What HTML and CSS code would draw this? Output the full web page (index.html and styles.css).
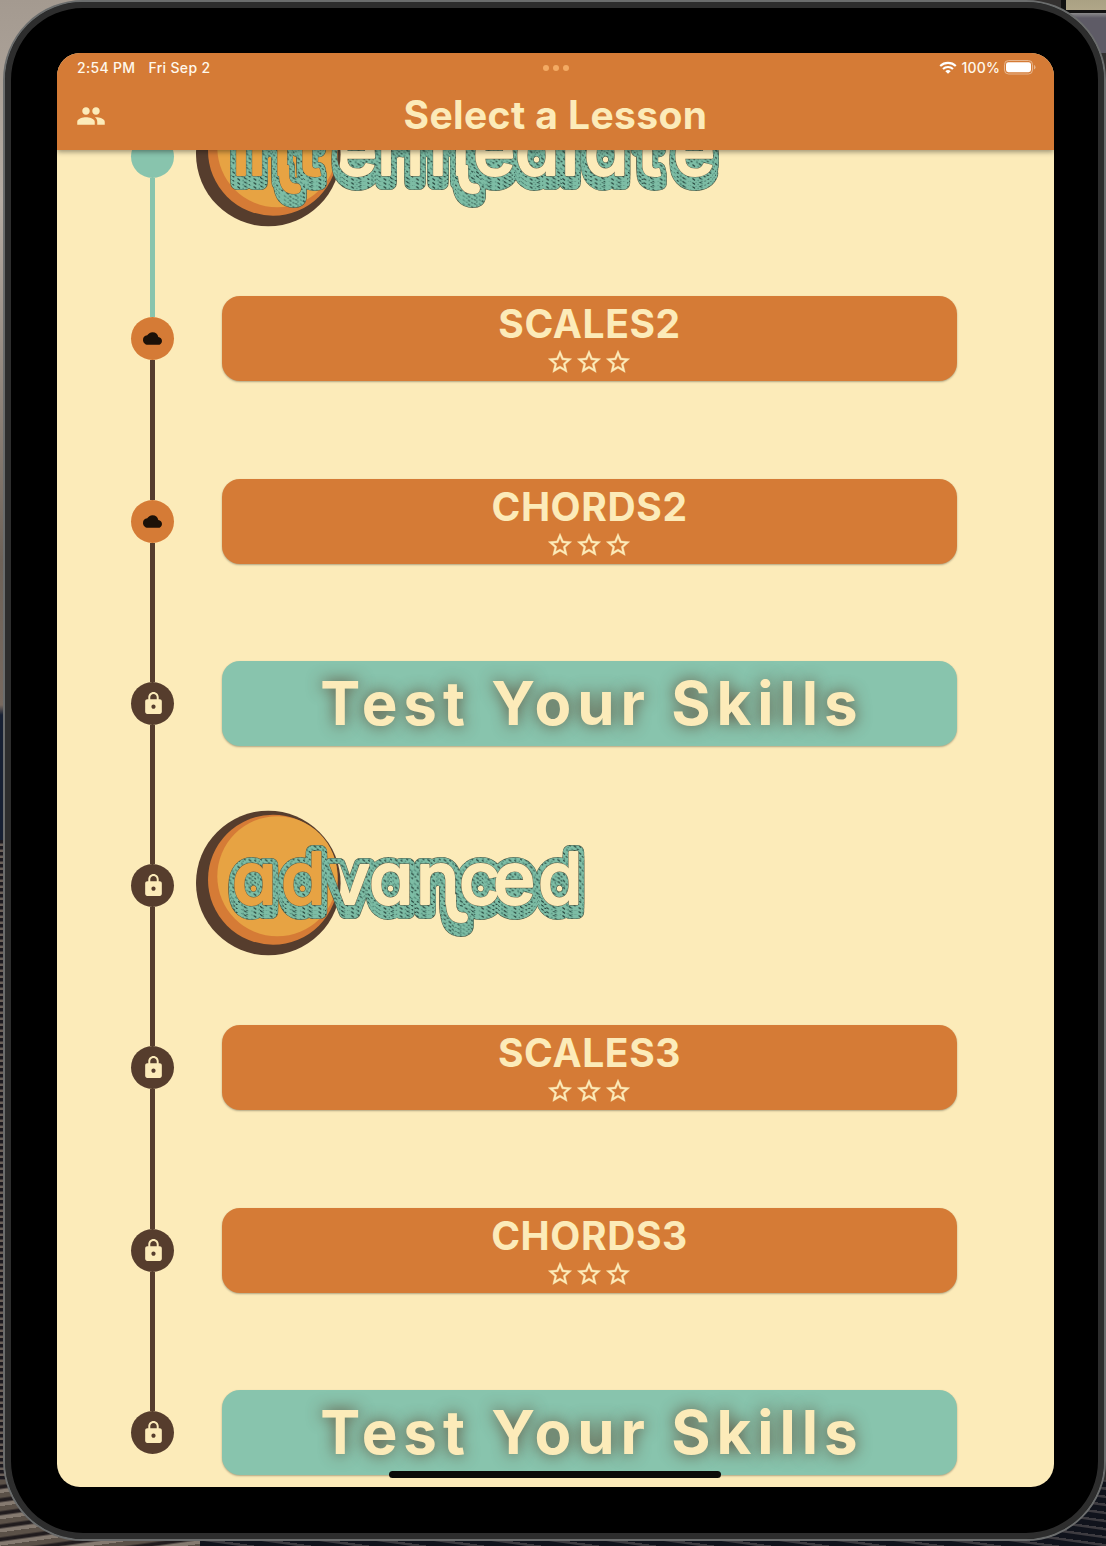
FILE: index.html
```html
<!DOCTYPE html>
<html lang="en">
<head>
<meta charset="utf-8">
<title>Select a Lesson</title>
<link rel="stylesheet" href="styles.css">
</head>
<body>
<svg class="sprite" width="0" height="0" aria-hidden="true">
  <defs>
    <symbol id="star" viewBox="0 0 24 24"><path d="M22 9.24l-7.19-.62L12 2 9.19 8.63 2 9.24l5.46 4.73L5.82 21 12 17.27 18.18 21l-1.63-7.03L22 9.24zM12 15.4l-3.76 2.27 1-4.28-3.32-2.88 4.38-.38L12 6.1l1.71 4.04 4.38.38-3.32 2.88 1 4.28L12 15.4z"/></symbol>
    <symbol id="cloud" viewBox="0 0 24 24"><path d="M19.35 10.04A7.49 7.49 0 0 0 12 4C9.11 4 6.6 5.64 5.35 8.04A5.994 5.994 0 0 0 0 14c0 3.31 2.69 6 6 6h13c2.76 0 5-2.24 5-5 0-2.64-2.05-4.78-4.65-4.96z"/></symbol>
    <symbol id="lock" viewBox="0 0 24 24"><path d="M18 8h-1V6c0-2.76-2.24-5-5-5S7 3.24 7 6v2H6c-1.1 0-2 .9-2 2v10c0 1.1.9 2 2 2h12c1.1 0 2-.9 2-2V10c0-1.1-.9-2-2-2zm-6 9c-1.1 0-2-.9-2-2s.9-2 2-2 2 .9 2 2-.9 2-2 2zm3.1-9H8.9V6c0-1.71 1.39-3.1 3.1-3.1s3.1 1.39 3.1 3.1v2z"/></symbol>
    <g id="disc">
      <circle cx="268.3" cy="88" r="72.3" fill="#563d2d"/>
      <circle cx="273" cy="84.700" r="65" fill="#d57b36"/>
      <circle cx="277.3" cy="81.3" r="60" fill="#e7a343"/>
    </g>
    <pattern id="face" patternUnits="userSpaceOnUse" x="190" y="0" width="560" height="183">
      <g transform="translate(-190 0)">
        <rect x="190" width="560" height="183" fill="#fcebb9"/>
        <use href="#disc"/>
      </g>
    </pattern>
    <pattern id="denim" patternUnits="userSpaceOnUse" width="13" height="11" patternTransform="scale(1.25)">
      <rect width="13" height="11" fill="#7dbda5"/>
      <path d="M0 1l2 1.5M4 0l1.5 1M8 2l2 1.5M2 4l1.5 1.2M10.500 5l1.500 1M0 7l1.500 1M4 7.500l2 1.500M8.500 8l1.500 1M6.500 10l1.500 1" stroke="#213f38" stroke-width=".9" fill="none"/>
      <path d="M11 0l1.500 1M6 4.500l2 1.500M12 8.500l1 1M2 10l1.500 1M2 2l1 1M12 3l1 1M4 5.500l1 1M9 6.500l1 1M11 10l1 1" stroke="#4c8574" stroke-width=".9" fill="none"/>
    </pattern>
  </defs>
</svg>

<div class="tablet">
  <div class="screen">
    <header class="bar">
      <div class="status">
        <div class="clock"><span>2:54 PM</span><span>Fri Sep 2</span></div>
        <div class="dots"><i></i><i></i><i></i></div>
        <div class="power">
          <svg class="wifi" viewBox="0 0 18 13"><g fill="none" stroke="#fff" stroke-width="2.1"><path d="M1.200 5a11.200 11.200 0 0 1 15.600 0"/><path d="M4 8a7.200 7.200 0 0 1 10 0"/></g><path d="M9 12.800L6.300 10.200a3.900 3.900 0 0 1 5.400 0z" fill="#fff"/></svg>
          <span>100%</span>
          <svg class="battery" viewBox="0 0 32 15"><rect x=".5" y=".5" width="28" height="13.500" rx="4" fill="none" stroke="#e8b68d"/><rect x="2" y="2.200" width="25" height="10" rx="2.400" fill="#fff"/><path d="M30 5q1.500.5 1.500 2.300T30 9.600z" fill="#e8b68d"/></svg>
        </div>
      </div>
      <div class="title-row">
        <svg class="people" viewBox="0 0 24 24"><path d="M16 11c1.660 0 2.990-1.340 2.990-3S17.660 5 16 5s-3 1.340-3 3 1.340 3 3 3zm-8 0c1.660 0 2.990-1.340 2.990-3S9.660 5 8 5 5 6.340 5 8s1.340 3 3 3zm0 2c-2.330 0-7 1.170-7 3.500V19h14v-2.500c0-2.330-4.670-3.500-7-3.500zm8 0c-.29 0-.62.02-.97.05 1.160.84 1.970 1.970 1.970 3.450V19h6v-2.500c0-2.330-4.670-3.500-7-3.500z"/></svg>
        <h1>Select a Lesson</h1>
      </div>
    </header>

    <main class="lessons">
      <section class="row">
        <div class="rail"><b class="blank"></b><em class="teal"></em><b class="teal"></b></div>
        <svg class="logo" viewBox="196 0 540 182.250">
          <use href="#disc"/>
          <g class="edge"><use href="#word-mid"/><use href="#word-mid" y="4"/><use href="#word-mid" y="8"/></g>
          <g class="cloth"><use href="#word-mid" y="8"/><use href="#word-mid" y="4"/><use href="#word-mid"/></g>
          <g class="rim"><use href="#word-mid"/></g>
          <g class="inner">
            <g id="word-mid">
              <path d="M280 100V110Q281 127 294 127Q300 127 300 122.500T295 118.500Q288 118 288 108V100Z"/>
              <path d="M459 100V110Q460 127 473 127Q479 127 479 122.500T474 118.500Q467 118 467 108V100Z"/>
              <text y="109" x="232 248 297 335 377 406 473 515 561 584 637 673">intermediate</text>
            </g>
          </g>
        </svg>
      </section>
      <section class="row">
        <div class="rail"><b class="teal"></b><em class="orange"><svg class="cloud"><use href="#cloud"/></svg></em><b></b></div>
        <div class="card"><h2>SCALES2</h2><div class="stars"><svg><use href="#star"/></svg><svg><use href="#star"/></svg><svg><use href="#star"/></svg></div></div>
      </section>
      <section class="row">
        <div class="rail"><b></b><em class="orange"><svg class="cloud"><use href="#cloud"/></svg></em><b></b></div>
        <div class="card"><h2>CHORDS2</h2><div class="stars"><svg><use href="#star"/></svg><svg><use href="#star"/></svg><svg><use href="#star"/></svg></div></div>
      </section>
      <section class="row">
        <div class="rail"><b></b><em><svg class="lock"><use href="#lock"/></svg></em><b></b></div>
        <div class="card test"><h2>Test Your Skills</h2></div>
      </section>
      <section class="row">
        <div class="rail"><b></b><em><svg class="lock"><use href="#lock"/></svg></em><b></b></div>
        <svg class="logo" viewBox="196 0 540 182.250">
          <use href="#disc"/>
          <g class="edge"><use href="#word-adv"/><use href="#word-adv" y="4"/><use href="#word-adv" y="8"/></g>
          <g class="cloth"><use href="#word-adv" y="8"/><use href="#word-adv" y="4"/><use href="#word-adv"/></g>
          <g class="rim"><use href="#word-adv"/></g>
          <g class="inner">
            <g id="word-adv">
              <path d="M447 100V110Q448 127 461 127Q467 127 467 122.500T462 118.500Q455 118 455 108V100Z"/>
              <text y="109" x="232 281 329 369 416 459 493 538">advanced</text>
            </g>
          </g>
        </svg>
      </section>
      <section class="row">
        <div class="rail"><b></b><em><svg class="lock"><use href="#lock"/></svg></em><b></b></div>
        <div class="card"><h2>SCALES3</h2><div class="stars"><svg><use href="#star"/></svg><svg><use href="#star"/></svg><svg><use href="#star"/></svg></div></div>
      </section>
      <section class="row">
        <div class="rail"><b></b><em><svg class="lock"><use href="#lock"/></svg></em><b></b></div>
        <div class="card"><h2>CHORDS3</h2><div class="stars"><svg><use href="#star"/></svg><svg><use href="#star"/></svg><svg><use href="#star"/></svg></div></div>
      </section>
      <section class="row">
        <div class="rail"><b></b><em><svg class="lock"><use href="#lock"/></svg></em><b class="blank"></b></div>
        <div class="card test"><h2>Test Your Skills</h2></div>
      </section>
    </main>
    <div class="home"></div>
  </div>
</div>
</body>
</html>
```

FILE: styles.css
```css
* { box-sizing: border-box; }

body {
  margin: 0;
  width: 1106px;
  height: 1546px;
  overflow: hidden;
  font-family: Inter, "Liberation Sans", sans-serif;
  background:
    linear-gradient(#aaa183, #b0a688) 1066px 0 / 40px 10px no-repeat,
    linear-gradient(#111, #111) 1061px 0 / 45px 13px no-repeat,
    linear-gradient(#8b8b8b, #5e5b66 5px, #5e5b66) 1070px 13px / 36px 40px no-repeat,
    repeating-linear-gradient(172deg, #5b5148 0 4px, #211c1e 6px 8px, #857a70 10px 13px) 0 1480px / 200px 66px no-repeat,
    repeating-linear-gradient(8deg, #10131c 0 5px, #3d3b40 6px 8px) 200px 1480px / 906px 66px no-repeat,
    repeating-linear-gradient(#1c1a20 0 3px, #6a6059 4px 6px) 0 840px / 12px 640px no-repeat,
    linear-gradient(#a49a90, #b6aca3 200px, #6e6258 560px, #77695f 705px, #172033 715px, #172033) 0 0 / 100px 840px no-repeat,
    #33302f;
}

.sprite { position: absolute; }

.tablet {
  width: 1103px;
  height: 1541px;
  margin-left: 3px;
  padding: 51px 50px 52px 52px;
  border: 2px solid #6b6d6d;
  border-radius: 80px;
  background: #000;
  box-shadow: inset 0 0 0 6px #2d2d2d;
}

.screen {
  position: relative;
  width: 997px;
  height: 1434px;
  overflow: hidden;
  border-radius: 23px;
  background: #fcebb9;
  display: flex;
  flex-direction: column;
}

.bar {
  position: relative;
  z-index: 1;
  flex: none;
  height: 97px;
  background: #d57b36;
  box-shadow: 0 2px 5px rgba(0, 0, 0, .38);
}

.status {
  height: 29px;
  padding: 0 18px 0 20px;
  display: grid;
  grid-template-columns: 1fr auto 1fr;
  align-items: center;
  color: #fff8ec;
  font-size: 14px;
  font-weight: 500;
}
.clock { display: flex; gap: 13px; letter-spacing: .32px; }
.dots { display: flex; gap: 4px; padding: 1px 1px 0 0; }
.dots i { width: 6px; height: 6px; border-radius: 50%; background: #f3aa63; }
.power { display: flex; justify-content: flex-end; align-items: center; gap: 4px; letter-spacing: .2px; }
.wifi { width: 18px; height: 13px; }
.battery { width: 32px; height: 15px; }

.title-row {
  height: 66px;
  display: grid;
  grid-template-columns: 50px 1fr 50px;
  align-items: center;
}
.people { width: 30px; height: 30px; margin: 2px 0 0 19px; fill: #fcebb9; }
h1, h2 { margin: 0; color: #fcebb9; font-weight: 700; white-space: nowrap; text-align: center; }
h1 { font-size: 39px; line-height: 66px; letter-spacing: .4px; }

.lessons { flex: 1; min-height: 0; overflow: hidden; }
.row { height: 182.250px; display: flex; align-items: center; padding-left: 74px; }
.row:first-child { margin-top: -84.500px; }

.rail { width: 43px; height: 100%; display: flex; flex-direction: column; align-items: center; }
.rail b { flex: 1; width: 5px; background: #563d2d; }
.rail em {
  width: 43px;
  height: 43px;
  border-radius: 50%;
  background: #563d2d;
  display: flex;
  align-items: center;
  justify-content: center;
}
.rail .teal { background: #88c4ad; }
.rail .orange { background: #d57b36; }
.rail .blank { background: none; }
.cloud { width: 19px; height: 19px; fill: #1c1108; }
.lock { width: 25px; height: 25px; margin-left: 1px; fill: #fcebb9; }

.card {
  width: 735px;
  height: 85px;
  margin-left: 48px;
  border-radius: 18px;
  background: #d57b36;
  box-shadow: 0 1px 2px rgba(0, 0, 0, .3);
  display: flex;
  flex-direction: column;
  align-items: center;
}
.card h2 { font-size: 39px; line-height: 55px; letter-spacing: .6px; }
.stars { display: flex; gap: 1px; margin-top: -3px; padding-right: 1px; }
.stars svg { width: 28px; height: 28px; fill: #fcebb9; stroke: #fcebb9; stroke-width: .3px; }
.card.test { background: #88c4ad; }
.card.test h2 {
  padding-left: 5px;
  font-size: 60px;
  font-weight: 700;
  line-height: 85px;
  letter-spacing: 6px;
  text-shadow: 0 0 16px rgba(84, 50, 30, .8);
}

.logo { flex: none; width: 540px; height: 182.250px; margin-left: 22px; overflow: visible; }
.logo text { font-size: 72px; font-weight: 500; font-feature-settings: "cv11"; }
.logo g { stroke-linejoin: round; }
.edge { fill: #4f5c49; stroke: #4f5c49; stroke-width: 13.800px; }
.cloth { fill: url(#denim); stroke: url(#denim); stroke-width: 12.800px; }
.rim { fill: #5d5b45; stroke: #5d5b45; stroke-width: 2.800px; }
.inner { fill: url(#face); stroke: url(#face); stroke-width: 2px; }

.home {
  position: absolute;
  left: 332px;
  bottom: 9px;
  width: 332px;
  height: 7px;
  border-radius: 4px;
  background: #0c0b09;
}
```
